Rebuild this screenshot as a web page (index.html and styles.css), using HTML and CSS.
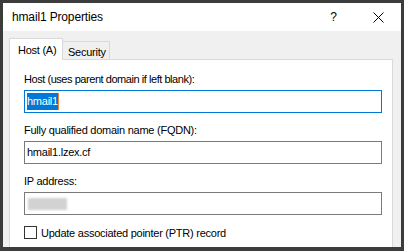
FILE: index.html
```html
<!DOCTYPE html>
<html lang="en">
<head>
    <meta charset="UTF-8">
    <title>hmail1 Properties</title>
    <link rel="stylesheet" href="styles.css">
</head>
<body>
    <div class="window">
        <div class="titlebar">
            <div class="title">hmail1 Properties</div>
            <div class="help">?</div>
            <div class="close">
                <svg width="11" height="11" viewBox="0 0 11 11">
                    <path d="M0.5 0.5 L10.5 10.5 M10.5 0.5 L0.5 10.5" stroke="#000" stroke-width="1" fill="none"/>
                </svg>
            </div>
        </div>
        <div class="content">
            <div class="tabs">
                <div class="tab active">Host (A)</div>
                <div class="tab">Security</div>
            </div>
            <div class="panel">
                <div class="field">
                    <label class="tight">Host (uses parent domain if left blank):</label>
                    <div class="input focused"><span class="selection">hmail1</span><span class="caret"></span></div>
                </div>
                <div class="field">
                    <label>Fully qualified domain name (FQDN):</label>
                    <div class="input">hmail1.lzex.cf</div>
                </div>
                <div class="field">
                    <label>IP address:</label>
                    <div class="input"><span class="blurred"></span></div>
                </div>
                <div class="check-row">
                    <span class="checkbox"></span>
                    <span>Update associated pointer (PTR) record</span>
                </div>
            </div>
        </div>
    </div>
</body>
</html>
```

FILE: styles.css
```css
body {
    margin: 0;
    padding: 0;
    font-family: 'Liberation Sans', Arial, sans-serif;
    background-color: #3c3c3c;
}

.window {
    box-sizing: border-box;
    width: 404px;
    height: 251px;
    border: 3px solid #3c3c3c;
    border-bottom-width: 4px;
    background: #f0f0f0;
    overflow: hidden;
    display: flex;
    flex-direction: column;
}

.titlebar {
    height: 28px;
    background: #fff;
    display: flex;
    align-items: center;
    padding-left: 9px;
    flex-shrink: 0;
}

.title {
    font-size: 12px;
    letter-spacing: -0.15px;
    color: #000;
    flex: 1;
}

.help {
    font-size: 12px;
    color: #000;
    margin-right: 36px;
}

.close {
    display: flex;
    margin-right: 17px;
}

.content {
    flex: 1;
    padding: 7px 8px 0 6px;
    font-size: 11px;
    letter-spacing: -0.25px;
    color: #000;
}

.tabs {
    display: flex;
    align-items: flex-end;
    height: 21px;
    position: relative;
    z-index: 1;
}

.tab {
    box-sizing: border-box;
    height: 18px;
    padding: 4px 6px 0 5px;
    border: 1px solid #d9d9d9;
    border-bottom: none;
    background: #f0f0f0;
}

.tab.active {
    width: 54px;
    height: 22px;
    padding: 5px 0 0 8px;
    background: #fff;
    margin-bottom: -1px;
}

.tab + .tab {
    border-left: none;
    width: 47px;
}

.panel {
    box-sizing: border-box;
    height: 200px;
    background: #fff;
    border: 1px solid #d9d9d9;
    padding: 13px 10px 0 14px;
}

.field {
    margin-bottom: 11px;
}

.field label {
    display: block;
    line-height: 13px;
    margin-bottom: 4px;
}

.field label.tight {
    letter-spacing: -0.45px;
}

.input {
    box-sizing: border-box;
    height: 23px;
    border: 1px solid #7a7a7a;
    padding: 0 2px;
    display: flex;
    align-items: center;
    line-height: 13px;
}

.input.focused {
    border-color: #0078d7;
}

.selection {
    background: #0078d7;
    color: #fff;
    padding: 2px 0;
    line-height: 13px;
}

.caret {
    width: 1px;
    height: 17px;
    background: #e68a3a;
}

.blurred {
    width: 39px;
    height: 12px;
    background: #d2d2d2;
    filter: blur(1px);
    margin-left: 1px;
}

.check-row {
    display: flex;
    align-items: center;
    gap: 4px;
}

.checkbox {
    box-sizing: border-box;
    width: 13px;
    height: 13px;
    border: 1px solid #333;
    background: #fff;
}
```
